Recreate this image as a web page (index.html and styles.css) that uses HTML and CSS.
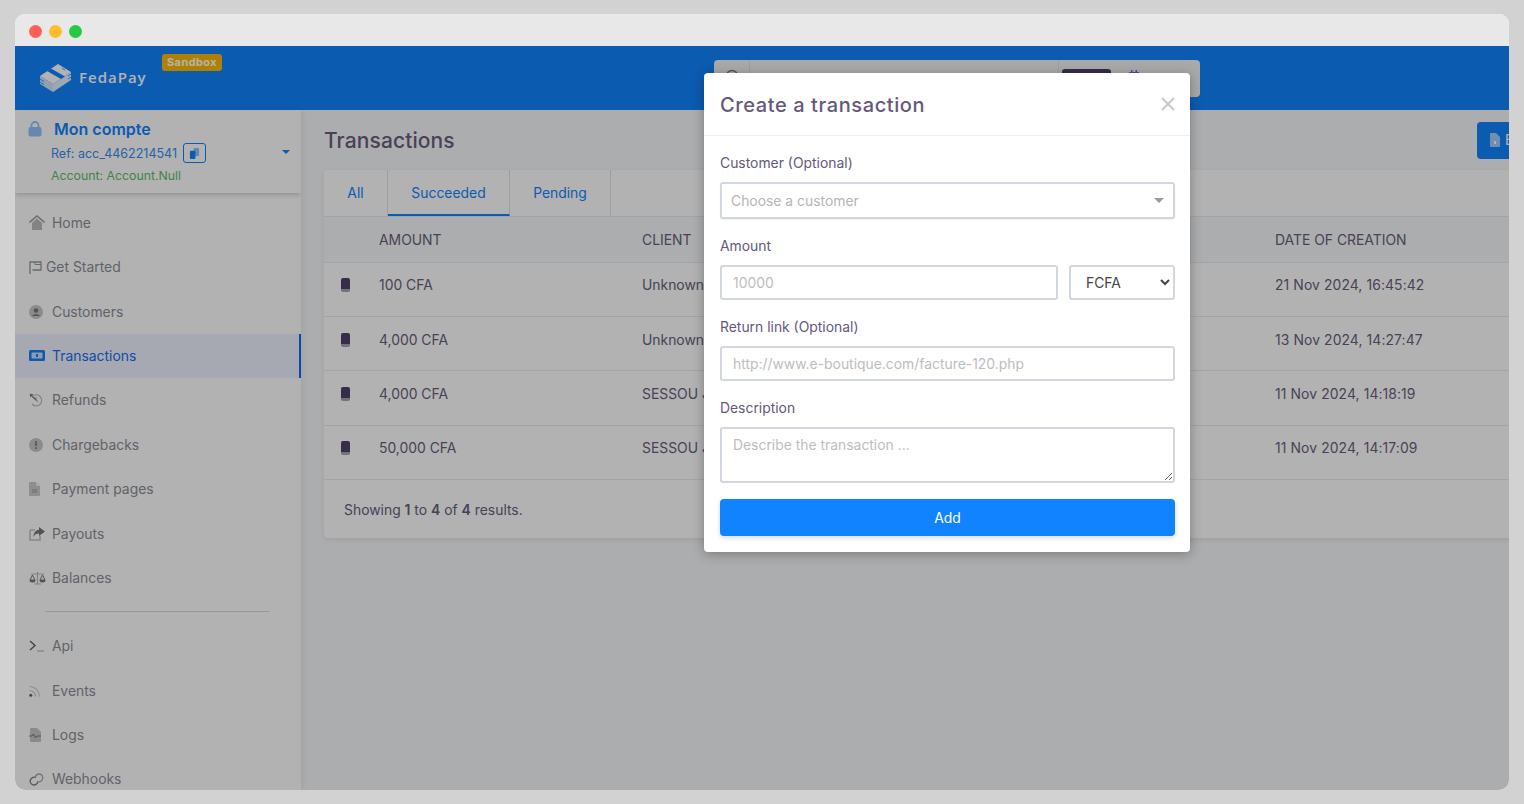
FILE: index.html
```html
<!DOCTYPE html>
<html lang="en">
<head>
<meta charset="utf-8">
<title>FedaPay - Transactions</title>
<link rel="stylesheet" href="styles.css">
</head>
<body>
<div class="window">
  <div class="titlebar">
    <span class="dot red"></span><span class="dot yellow"></span><span class="dot green"></span>
  </div>
  <div class="app">
    <header class="topbar">
      <div class="logo">
        <svg class="logo-mark" viewBox="0 0 32 30" width="32" height="30">
          <path d="M0 14L18 2L31 10L13 22Z" fill="#fff"/>
          <path d="M0 14L13 22V30L0 22Z" fill="#fff" opacity=".8"/>
          <path d="M13 22L31 10V18L13 30Z" fill="#fff" opacity=".88"/>
          <path d="M7 9L11 6.500L25 14.500L21 17Z" fill="#1183fe"/>
          <path d="M-1 16.500L4 19.500M-1 19.500L4 22.500M-1 13.500L2 12M28 14L33 11M28 17L33 14M22 6L25 8M25 5L30 8" stroke="#1183fe" stroke-width=".8"/>
        </svg>
        <span class="logo-text">FedaPay</span>
        <span class="sandbox">Sandbox</span>
      </div>
      <div class="search">
        <svg class="search-icon" viewBox="0 0 16 16" width="16" height="16"><circle cx="7" cy="7" r="5.500" fill="none" stroke="#777" stroke-width="1.400"/><path d="M11 11l4 4" stroke="#777" stroke-width="1.400"/></svg>
        <span class="search-input"></span>
        <span class="search-btn"></span>
        <svg class="cal-icon" viewBox="0 0 12 12" width="12" height="12"><path d="M1 2h10v9H1zM3 0h1.500v3H3zM7.500 0H9v3H7.500z" fill="#7a68e8"/></svg>
      </div>
    </header>
    <div class="body">
      <aside class="sidebar">
        <div class="account">
          <div class="account-name">
            <svg viewBox="0 0 14 16" width="14" height="16"><path d="M3.500 7V4.500a3.500 3.500 0 0 1 7 0V7" fill="none" stroke="#94c3fa" stroke-width="1.800"/><rect x="0.500" y="6" width="13" height="9.500" rx="2" fill="#94c3fa"/></svg>
            <span>Mon compte</span>
          </div>
          <div class="account-ref">
            <span>Ref: acc_4462214541</span>
            <span class="copy"><svg viewBox="0 0 12 12" width="11" height="11"><rect x="5" y="0" width="6" height="9" rx="1" fill="#94c3fa"/><rect x="1" y="3" width="6" height="9" rx="1" fill="#1183fe"/></svg></span>
          </div>
          <div class="account-null">Account: Account.Null</div>
          <span class="caret"></span>
        </div>
        <nav class="nav">
          <a class="nav-item"><svg class="ni" viewBox="0 0 16 15" width="16" height="15"><path d="M3 8L8 3.500L13 8V15H3Z" fill="#bcbcbc"/><path d="M0.500 7.500L8 1L15.500 7.500" fill="none" stroke="#a0a0a0" stroke-width="1.600"/></svg><span>Home</span></a>
          <a class="nav-item tight"><svg class="ni" viewBox="0 0 13 13" width="13" height="13"><path d="M1 13V1h11v8H3.500" fill="none" stroke="#999" stroke-width="1.300"/><path d="M6 1v2.500h6" fill="none" stroke="#999" stroke-width="1"/></svg><span>Get Started</span></a>
          <a class="nav-item"><svg class="ni" viewBox="0 0 14 14" width="14" height="14"><circle cx="7" cy="7" r="7" fill="#c8c8c8"/><circle cx="7" cy="5.500" r="2.300" fill="#787878"/><path d="M3 11c1-2.500 7-2.500 8 0z" fill="#787878"/></svg><span>Customers</span></a>
          <a class="nav-item active"><svg class="ni" viewBox="0 0 16 11" width="16" height="11"><rect width="16" height="11" rx="1.500" fill="#1183fe"/><rect x="2.500" y="2.500" width="11" height="6" rx="1" fill="#cfe0f5"/><rect x="7" y="4" width="2" height="3" fill="#1183fe"/></svg><span>Transactions</span></a>
          <a class="nav-item"><svg class="ni" viewBox="0 0 14 14" width="14" height="14"><path d="M4.500 2.500A5.500 5.500 0 1 1 3 11" fill="none" stroke="#c0c0c0" stroke-width="1.400"/><path d="M1 1l6 6" stroke="#808080" stroke-width="1.400"/><path d="M1 1h3.500L1 4.500z" fill="#808080"/><path d="M7 4v3.500l2 1" fill="none" stroke="#999"/></svg><span>Refunds</span></a>
          <a class="nav-item"><svg class="ni" viewBox="0 0 14 14" width="14" height="14"><circle cx="7" cy="7" r="7" fill="#c8c8c8"/><rect x="6.200" y="3" width="1.600" height="5" fill="#777"/><rect x="6.200" y="9.300" width="1.600" height="1.700" fill="#777"/></svg><span>Chargebacks</span></a>
          <a class="nav-item"><svg class="ni" viewBox="0 0 11 14" width="11" height="14"><path d="M0 1a1 1 0 0 1 1-1h6l4 4v9a1 1 0 0 1-1 1H1a1 1 0 0 1-1-1z" fill="#cccccc"/><path d="M7 0l4 4H7z" fill="#eee"/><path d="M3 8h5M3 10h5" stroke="#999"/></svg><span>Payment pages</span></a>
          <a class="nav-item"><svg class="ni" viewBox="0 0 16 14" width="16" height="14"><path d="M1 3h5M1 3v10h10V9" fill="none" stroke="#c4c4c4" stroke-width="1.600"/><path d="M10 0l6 4.500-6 4.500V6.500C7 6.500 5.500 7.500 4.500 10 4.500 5.500 7 3 10 2.800z" fill="#787878"/></svg><span>Payouts</span></a>
          <a class="nav-item"><svg class="ni" viewBox="0 0 17 14" width="17" height="14"><path d="M2 3h13M8.500 1v12M5 13h7" stroke="#bbb" stroke-width="1.200"/><path d="M3.500 4L1 9h5zM13.500 4L11 9h5z" fill="none" stroke="#777"/><path d="M0.500 9a3 2.500 0 0 0 6 0zM10.500 9a3 2.500 0 0 0 6 0z" fill="#777"/></svg><span>Balances</span></a>
          <div class="nav-divider"></div>
          <a class="nav-item"><svg class="ni" viewBox="0 0 16 12" width="16" height="12"><path d="M1 1l5 4.500L1 10" fill="none" stroke="#666" stroke-width="1.500"/><path d="M8 11h7" stroke="#aaa" stroke-width="1"/></svg><span>Api</span></a>
          <a class="nav-item"><svg class="ni" viewBox="0 0 12 12" width="12" height="12"><circle cx="1.800" cy="10.200" r="1.500" fill="#666"/><path d="M0.500 5.500a6 6 0 0 1 6 6M0.500 1.500a10 10 0 0 1 10 10" fill="none" stroke="#ccc" stroke-width="1.100"/></svg><span>Events</span></a>
          <a class="nav-item"><svg class="ni" viewBox="0 0 12 14" width="12" height="14"><path d="M1 1a1 1 0 0 1 1-1h6l4 4v9a1 1 0 0 1-1 1H2a1 1 0 0 1-1-1z" fill="#c8c8c8"/><path d="M0 8h3l1.500-2 2 4 1.500-2h4" fill="none" stroke="#777"/></svg><span>Logs</span></a>
          <a class="nav-item"><svg class="ni" viewBox="0 0 16 13" width="16" height="13"><path d="M7 4.500a4 4 0 0 0-5 1.500c-2 2.500 0 6 3 6 2 0 3-1 4-3" fill="none" stroke="#808080" stroke-width="1.300"/><path d="M8 8.500a4 4 0 0 0 5-1.500c2-2.500 0-6-3-6-2 0-3 1-4 3" fill="none" stroke="#a8a8a8" stroke-width="1.300"/></svg><span>Webhooks</span></a>
        </nav>
      </aside>
      <main class="main">
        <div class="page-head">
          <h1>Transactions</h1>
          <span class="export"><svg viewBox="0 0 10 14" width="10" height="14"><path d="M0 1a1 1 0 0 1 1-1h5l4 4v9a1 1 0 0 1-1 1H1a1 1 0 0 1-1-1z" fill="#fff" opacity=".6"/><rect x="4" y="8" width="2" height="3" fill="#fff"/></svg><span>Export</span></span>
        </div>
        <section class="card">
          <div class="tabs">
            <a class="tab tab-all">All</a>
            <a class="tab tab-on">Succeeded</a>
            <a class="tab tab-pending">Pending</a>
          </div>
          <table class="tx">
            <thead>
              <tr><th class="c-ico"></th><th class="c-amt">AMOUNT</th><th class="c-cli">CLIENT</th><th class="c-mid"></th><th>DATE OF CREATION</th></tr>
            </thead>
            <tbody>
              <tr><td><span class="phone"></span></td><td>100 CFA</td><td>Unknown</td><td></td><td class="date">21 Nov 2024, 16:45:42</td></tr>
              <tr><td><span class="phone"></span></td><td>4,000 CFA</td><td>Unknown</td><td></td><td class="date">13 Nov 2024, 14:27:47</td></tr>
              <tr><td><span class="phone"></span></td><td>4,000 CFA</td><td>SESSOU Jean</td><td></td><td class="date">11 Nov 2024, 14:18:19</td></tr>
              <tr><td><span class="phone"></span></td><td>50,000 CFA</td><td>SESSOU Jean</td><td></td><td class="date">11 Nov 2024, 14:17:09</td></tr>
            </tbody>
          </table>
          <div class="card-foot">Showing <b>1</b> to <b>4</b> of <b>4</b> results.</div>
        </section>
      </main>
    </div>
    <div class="overlay"></div>
    <div class="modal">
      <div class="modal-head">
        <h2>Create a transaction</h2>
        <svg class="close" viewBox="0 0 14 14" width="14" height="14"><path d="M1 1l12 12M13 1L1 13" stroke="#c9c9c9" stroke-width="2"/></svg>
      </div>
      <form class="modal-body">
        <label class="lbl">Customer (Optional)</label>
        <div class="field picker"><span>Choose a customer</span><i class="pick-caret"></i></div>
        <label class="lbl lbl-gap">Amount</label>
        <div class="amount-row">
          <input class="field input grow" placeholder="10000">
          <select class="field currency"><option>FCFA</option></select>
        </div>
        <label class="lbl lbl-gap">Return link (Optional)</label>
        <input class="field input link" placeholder="http://www.e-boutique.com/facture-120.php">
        <label class="lbl lbl-gap">Description</label>
        <textarea class="field area" placeholder="Describe the transaction ..."></textarea>
        <button class="add" type="button">Add</button>
      </form>
    </div>
  </div>
</div>
</body>
</html>
```
FILE: styles.css
```css
* { box-sizing: border-box; }
html, body { height: 100%; }
body {
  margin: 0;
  background: #d2d2d2;
  padding: 14px 15px;
  font-family: Inter, "Liberation Sans", sans-serif;
  font-size: 13.900px;
  color: #6a5d80;
  overflow: hidden;
}
.window {
  width: 1494px;
  height: 776px;
  border-radius: 10px;
  overflow: hidden;
  display: flex;
  flex-direction: column;
  background: #fff;
}
.titlebar {
  height: 32px;
  flex: none;
  background: #e8e8e8;
  display: flex;
  align-items: center;
  gap: 7px;
  padding: 2px 0 0 13.500px;
}
.dot { width: 13px; height: 13px; border-radius: 50%; }
.red { background: #ff5f57; }
.yellow { background: #febc2e; }
.green { background: #28c840; }
.app { position: relative; flex: 1; min-height: 0; display: flex; flex-direction: column; overflow: hidden; }
.topbar {
  height: 64px;
  flex: none;
  background: #1183fe;
  display: flex;
  align-items: flex-start;
  padding-left: 25px;
}
.logo { display: flex; align-items: center; position: relative; height: 64px; width: 674px; flex: none; }
.logo-mark { flex: none; overflow: visible; margin-top: -2px; }
.logo-text { margin-left: 7px; color: #fff; font-family: "Open Sans", sans-serif; font-weight: 600; font-size: 15px; letter-spacing: 1px; margin-top: -2px; }
.sandbox {
  position: absolute;
  left: 122px;
  top: 8px;
  height: 17px;
  padding: 0 5px;
  background: #fdb900;
  color: #fff;
  border-radius: 3px;
  font-size: 11px;
  font-weight: 700;
  letter-spacing: .4px;
  line-height: 17px;
}
.search {
  margin-top: 14px;
  width: 486px;
  height: 37px;
  background: #f2f2f2;
  border-radius: 4px;
  display: flex;
  align-items: center;
  padding-left: 11px;
}
.search-icon { flex: none; margin-top: -4px; }
.search-input { width: 310px; height: 37px; flex: none; margin-left: 8px; border-left: 1px solid #e4e4e4; border-right: 1px solid #e4e4e4; }
.search-btn { width: 49px; height: 28px; background: #4f3f6a; border-radius: 3px; margin: 9px 0 0 3px; align-self: flex-start; flex: none; }
.cal-icon { margin-left: 17px; margin-top: -6px; }
.body { flex: 1; min-height: 0; display: flex; }
.sidebar {
  width: 286px;
  flex: none;
  background: #fff;
  overflow: hidden;
  box-shadow: 2px 0 6px rgba(0,0,0,.06);
  position: relative;
  z-index: 1;
}
.account {
  height: 83px;
  position: relative;
  padding: 9px 0 0 13px;
  box-shadow: 0 2px 5px rgba(0,0,0,.18);
}
.account-name { display: flex; align-items: center; gap: 12px; color: #1183fe; font-size: 16px; font-weight: 600; height: 20px; }
.account-ref { display: flex; align-items: center; gap: 6px; color: #3a8cf0; font-size: 12.500px; margin: 3px 0 0 23px; height: 22px; }
.copy { width: 23px; height: 20px; border: 1px solid #1183fe; border-radius: 3px; display: flex; align-items: center; justify-content: center; }
.account-null { color: #5cc066; font-size: 12.300px; margin: 4px 0 0 23px; }
.caret { position: absolute; right: 11px; top: 40px; border: 4px solid transparent; border-top: 4px solid #1183fe; border-bottom: 0; }
.nav { padding-top: 7.600px; display: flex; flex-direction: column; }
.nav-item {
  height: 44.400px;
  flex: none;
  display: flex;
  align-items: center;
  padding-left: 14px;
  color: #8b8e97;
  position: relative;
}
.nav-item span { position: absolute; left: 37px; }
.nav-item.tight span { left: 31px; }
.nav-item.active { background: #eef2ff; color: #1a6df0; box-shadow: inset -2px 0 0 #1169f0; }
.nav-divider { height: 1px; background: #d9dce6; margin: 11px 32px 12px 30px; flex: none; }
.main { flex: 1; min-width: 0; background: #f7f8fa; padding: 16px 0 0 23px; overflow: hidden; }
.page-head { display: flex; align-items: center; justify-content: space-between; height: 28px; width: 1260px; }
.page-head h1 { margin: 0; font-size: 21px; font-weight: 500; letter-spacing: .1px; color: #6a5d80; }
.export { display: flex; align-items: center; gap: 5px; background: #1183fe; color: #fff; height: 37px; width: 90px; border-radius: 4px; padding-left: 13px; flex: none; margin-left: auto; margin-right: 17px; }
.card { width: 1300px; margin-top: 16px; background: #fff; border-radius: 4px; box-shadow: 0 2px 6px rgba(0,0,0,.08); }
.tabs { height: 47px; display: flex; border-bottom: 1px solid #e9ecef; }
.tab { display: flex; align-items: center; justify-content: center; color: #1183fe; border-right: 1px solid #dee2ec; }
.tab-all { width: 64px; }
.tab-on { width: 122px; border-bottom: 2px solid #1183fe; padding-top: 2px; }
.tab-pending { width: 101px; }
.tx { width: 100%; border-collapse: collapse; table-layout: fixed; }
.c-ico { width: 39px; }
.c-amt { width: 263px; }
.c-cli { width: 280px; }
.c-mid { width: 353px; }
.tx th { text-align: left; font-weight: 400; height: 45px; background: #f6f8fa; padding: 2px 16px 0; border-bottom: 1px solid #e9ecef; }
.tx td { height: 54.400px; padding: 0 16px 8px; border-bottom: 1px solid #e9ecef; white-space: nowrap; overflow: hidden; }
.tx th:first-child, .tx td:first-child { padding-right: 0; }
.tx .date { letter-spacing: .1px; }
.phone { display: block; width: 9px; height: 14px; margin-left: 1px; border-radius: 2px; background: #4f3f6a; border-bottom: 3px solid #a5a5ae; }
.card-foot { height: 58px; padding: 22px 0 0 20px; }
.card-foot b { font-weight: 600; }
.overlay { position: absolute; inset: 0; background: rgba(0,0,0,.3); z-index: 5; }
.modal {
  position: absolute;
  left: 689px;
  top: 27px;
  width: 486px;
  height: 479px;
  background: #fff;
  border-radius: 4px;
  z-index: 6;
  box-shadow: 0 2px 12px rgba(0,0,0,.3);
  color: #65587b;
}
.modal-head { height: 63px; border-bottom: 1px solid #eef0f3; padding: 2px 15px 0 16px; display: flex; justify-content: space-between; align-items: center; }
.modal-head h2 { margin: 0; font-size: 20px; font-weight: 500; letter-spacing: .6px; }
.close { margin-top: -2px; }
.modal-body { padding: 19px 15px 0 16px; display: flex; flex-direction: column; }
.lbl { height: 17px; line-height: 17px; }
.field {
  border: 2px solid #d2d6de;
  border-radius: 3px;
  background: #fff;
  font-family: Inter, "Liberation Sans", sans-serif;
  font-size: 13.900px;
  outline: none;
}
.picker { margin-top: 10px; height: 37px; padding: 0 9px; display: flex; align-items: center; justify-content: space-between; color: #b5b5b5; box-shadow: 0 1px 2px rgba(0,0,0,.06); }
.pick-caret { border: 5px solid transparent; border-top: 5px solid #9a9a9a; border-bottom: 0; }
.lbl-gap { margin-top: 19px; }
.amount-row { display: flex; gap: 11px; margin-top: 10px; }
.input { height: 35px; padding: 0 11px; color: #5f5075; }
.link { margin-top: 10px; }
.input::placeholder, .area::placeholder { color: #bdbdbd; opacity: 1; }
.grow { flex: 1; min-width: 0; }
.currency { width: 106px; height: 35px; padding: 0 0 0 11px; color: #444; }
.area { margin-top: 10px; height: 56px; padding: 8px 11px; display: block; resize: vertical; }
.add { margin-top: 16px; height: 37px; background: #1183fe; color: #fff; border: 0; border-radius: 4px; font-family: Inter, "Liberation Sans", sans-serif; font-size: 13.900px; box-shadow: 0 2px 5px rgba(0,0,0,.15); }
```
